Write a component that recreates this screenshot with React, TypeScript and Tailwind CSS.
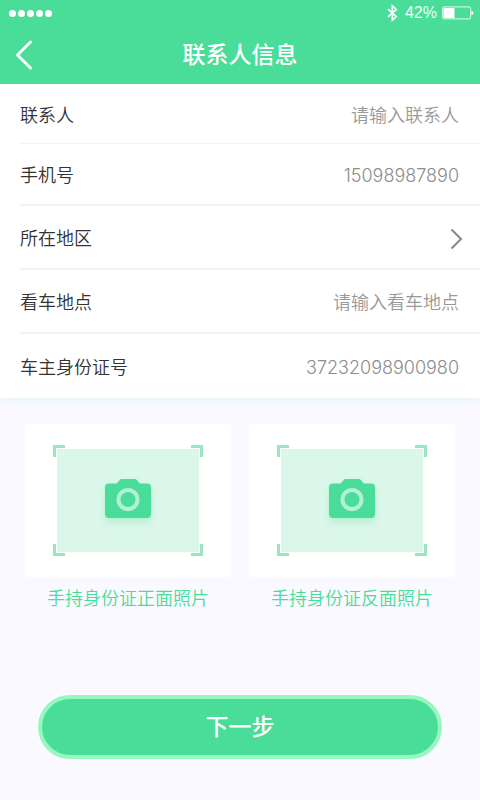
import { useState } from "react"
import type { ReactNode } from "react"
import clsx from "clsx"

const photos = [
	{ id: "photo-front", label: "手持身份证正面照片" },
	{ id: "photo-back", label: "手持身份证反面照片" },
]

function StatusBar() {
	return (
		<div className="flex h-[26px] items-center justify-between pr-[6px] pl-[9px]">
			<div className="flex gap-[2px]">
				{[0, 1, 2, 3, 4].map((dot) => (
					<span key={dot} className="size-[7px] rounded-full bg-white" />
				))}
			</div>
			<div className="flex items-center">
				<svg width="11" height="18" viewBox="0 0 11 18" fill="none" stroke="white" strokeWidth="1.6">
					<path d="M1 5.2 9.3 12.6 5.3 16.2V1.8L9.3 5.4 1 12.8" />
				</svg>
				<span className="ml-[7px] font-['Liberation_Sans'] text-base leading-5 text-white/90">42%</span>
				<svg className="ml-[5px]" width="32" height="14" viewBox="0 0 32 14" fill="none">
					<rect x="0.6" y="0.9" width="28" height="12" rx="1.5" stroke="white" strokeOpacity="0.85" />
					<rect x="1.5" y="2" width="11" height="10" fill="white" />
					<path d="M29.4 4.8c1.7.5 2 1.3 2 2.2s-.3 1.7-2 2.2z" fill="white" />
				</svg>
			</div>
		</div>
	)
}

function Row({ className, children }: { className?: string; children: ReactNode }) {
	return (
		<div className={clsx("ml-5 flex items-center border-[#f3f3f3] pt-1 pr-[21px]", className)}>
			{children}
		</div>
	)
}

type FieldProps = {
	id: string
	label: string
	value: string
	placeholder?: string
	className: string
	onChange: (id: string, value: string) => void
}

function Field({ id, label, value, placeholder, className, onChange }: FieldProps) {
	return (
		<Row className={className}>
			<label htmlFor={id} className="shrink-0 font-[350] text-[#333]">
				{label}
			</label>
			<input
				id={id}
				value={value}
				placeholder={placeholder}
				onChange={(e) => onChange(id, e.target.value)}
				className="min-w-0 flex-1 bg-transparent text-right font-[350] text-[#8c8c8c] outline-none placeholder:text-[#999]"
			/>
		</Row>
	)
}

function CameraIcon() {
	return (
		<svg
			className="overflow-visible drop-shadow-[0_4px_3px_rgba(73,221,153,0.25)]"
			width="46"
			height="39"
			viewBox="0 0 46 39"
		>
			<path
				d="M4 4.5h6.500c1 0 1.600-.3 2.200-1l1.500-2C14.900.5 15.600 0 16.600 0h13.300c1 0 1.700.5 2.400 1.500l1.500 2c.6.7 1.200 1 2.200 1H42a4 4 0 0 1 4 4V35a4 4 0 0 1-4 4H4a4 4 0 0 1-4-4V8.500a4 4 0 0 1 4-4z"
				fill="#49dd99"
			/>
			<circle cx="23" cy="20.500" r="9.500" fill="none" stroke="#b1f1d2" strokeWidth="4" />
		</svg>
	)
}

function PhotoUpload({ id, label }: { id: string; label: string }) {
	return (
		<label htmlFor={id} className="flex flex-1 cursor-pointer flex-col items-center">
			<input id={id} type="file" accept="image/*" className="sr-only" />
			<span className="flex w-full justify-center bg-white py-[21px]">
				<span className="relative p-1">
					<span className="flex h-[103px] w-[142px] items-center justify-center bg-[#daf7e9] pb-1">
						<CameraIcon />
					</span>
					<span className="absolute top-0 left-0 size-3 border-t-3 border-l-3 border-[#98e6c2]" />
					<span className="absolute top-0 right-0 size-3 border-t-3 border-r-3 border-[#98e6c2]" />
					<span className="absolute bottom-0 left-0 size-3 border-b-3 border-l-3 border-[#98e6c2]" />
					<span className="absolute right-0 bottom-0 size-3 border-r-3 border-b-3 border-[#98e6c2]" />
				</span>
			</span>
			<span className="mt-2 leading-7 font-[350] text-[#49dd99]">{label}</span>
		</label>
	)
}

export default function App() {
	const [form, setForm] = useState<Record<string, string>>({
		contact: "",
		phone: "15098987890",
		place: "",
		idNumber: "37232098900980",
	})

	const handleChange = (id: string, value: string) => {
		setForm({ ...form, [id]: value })
	}

	return (
		<div className="min-h-screen bg-[#faf9ff] font-[Inter,'Noto_Sans_CJK_SC',sans-serif] text-lg">
			<header className="bg-[#49dd99] text-white">
				<StatusBar />
				<div className="grid h-[58px] grid-cols-[48px_1fr_48px] items-center">
					<button type="button" aria-label="返回" className="pl-[15px]">
						<svg width="18" height="30" viewBox="0 0 18 30" fill="none" stroke="white" strokeWidth="3">
							<path d="M15.500 2 2.500 15l13 13" strokeLinecap="round" strokeLinejoin="round" />
						</svg>
					</button>
					<h1 className="text-center text-[23px] leading-8 font-medium">联系人信息</h1>
				</div>
			</header>

			<form onSubmit={(e) => e.preventDefault()}>
				<div className="bg-white shadow-[0_2px_8px_rgba(73,221,153,0.12)]">
					<Field
						id="contact"
						label="联系人"
						placeholder="请输入联系人"
						value={form.contact}
						onChange={handleChange}
						className="h-[60px] border-b"
					/>
					<Field
						id="phone"
						label="手机号"
						value={form.phone}
						onChange={handleChange}
						className="h-[62px] border-b-2"
					/>
					<Row className="h-16 border-b-2">
						<button type="button" className="flex flex-1 items-center justify-between font-[350] text-[#333]">
							所在地区
							<svg className="-mr-1" width="14" height="22" viewBox="0 0 14 22" fill="none" stroke="#888" strokeWidth="2">
								<path d="m2.500 1.500 9.500 9.500-9.500 9.500" />
							</svg>
						</button>
					</Row>
					<Field
						id="place"
						label="看车地点"
						placeholder="请输入看车地点"
						value={form.place}
						onChange={handleChange}
						className="h-16 border-b-2"
					/>
					<Field
						id="idNumber"
						label="车主身份证号"
						value={form.idNumber}
						onChange={handleChange}
						className="h-16"
					/>
				</div>

				<div className="flex gap-[18px] px-[25px] pt-[26px]">
					{photos.map((photo) => (
						<PhotoUpload key={photo.id} id={photo.id} label={photo.label} />
					))}
				</div>

				<div className="px-[38px] pt-[82px] pb-10">
					<button
						type="submit"
						className="h-16 w-full rounded-full border-4 border-[#98f6bf] bg-[#49dd99] pt-px text-[23px] font-medium text-white"
					>
						下一步
					</button>
				</div>
			</form>
		</div>
	)
}
